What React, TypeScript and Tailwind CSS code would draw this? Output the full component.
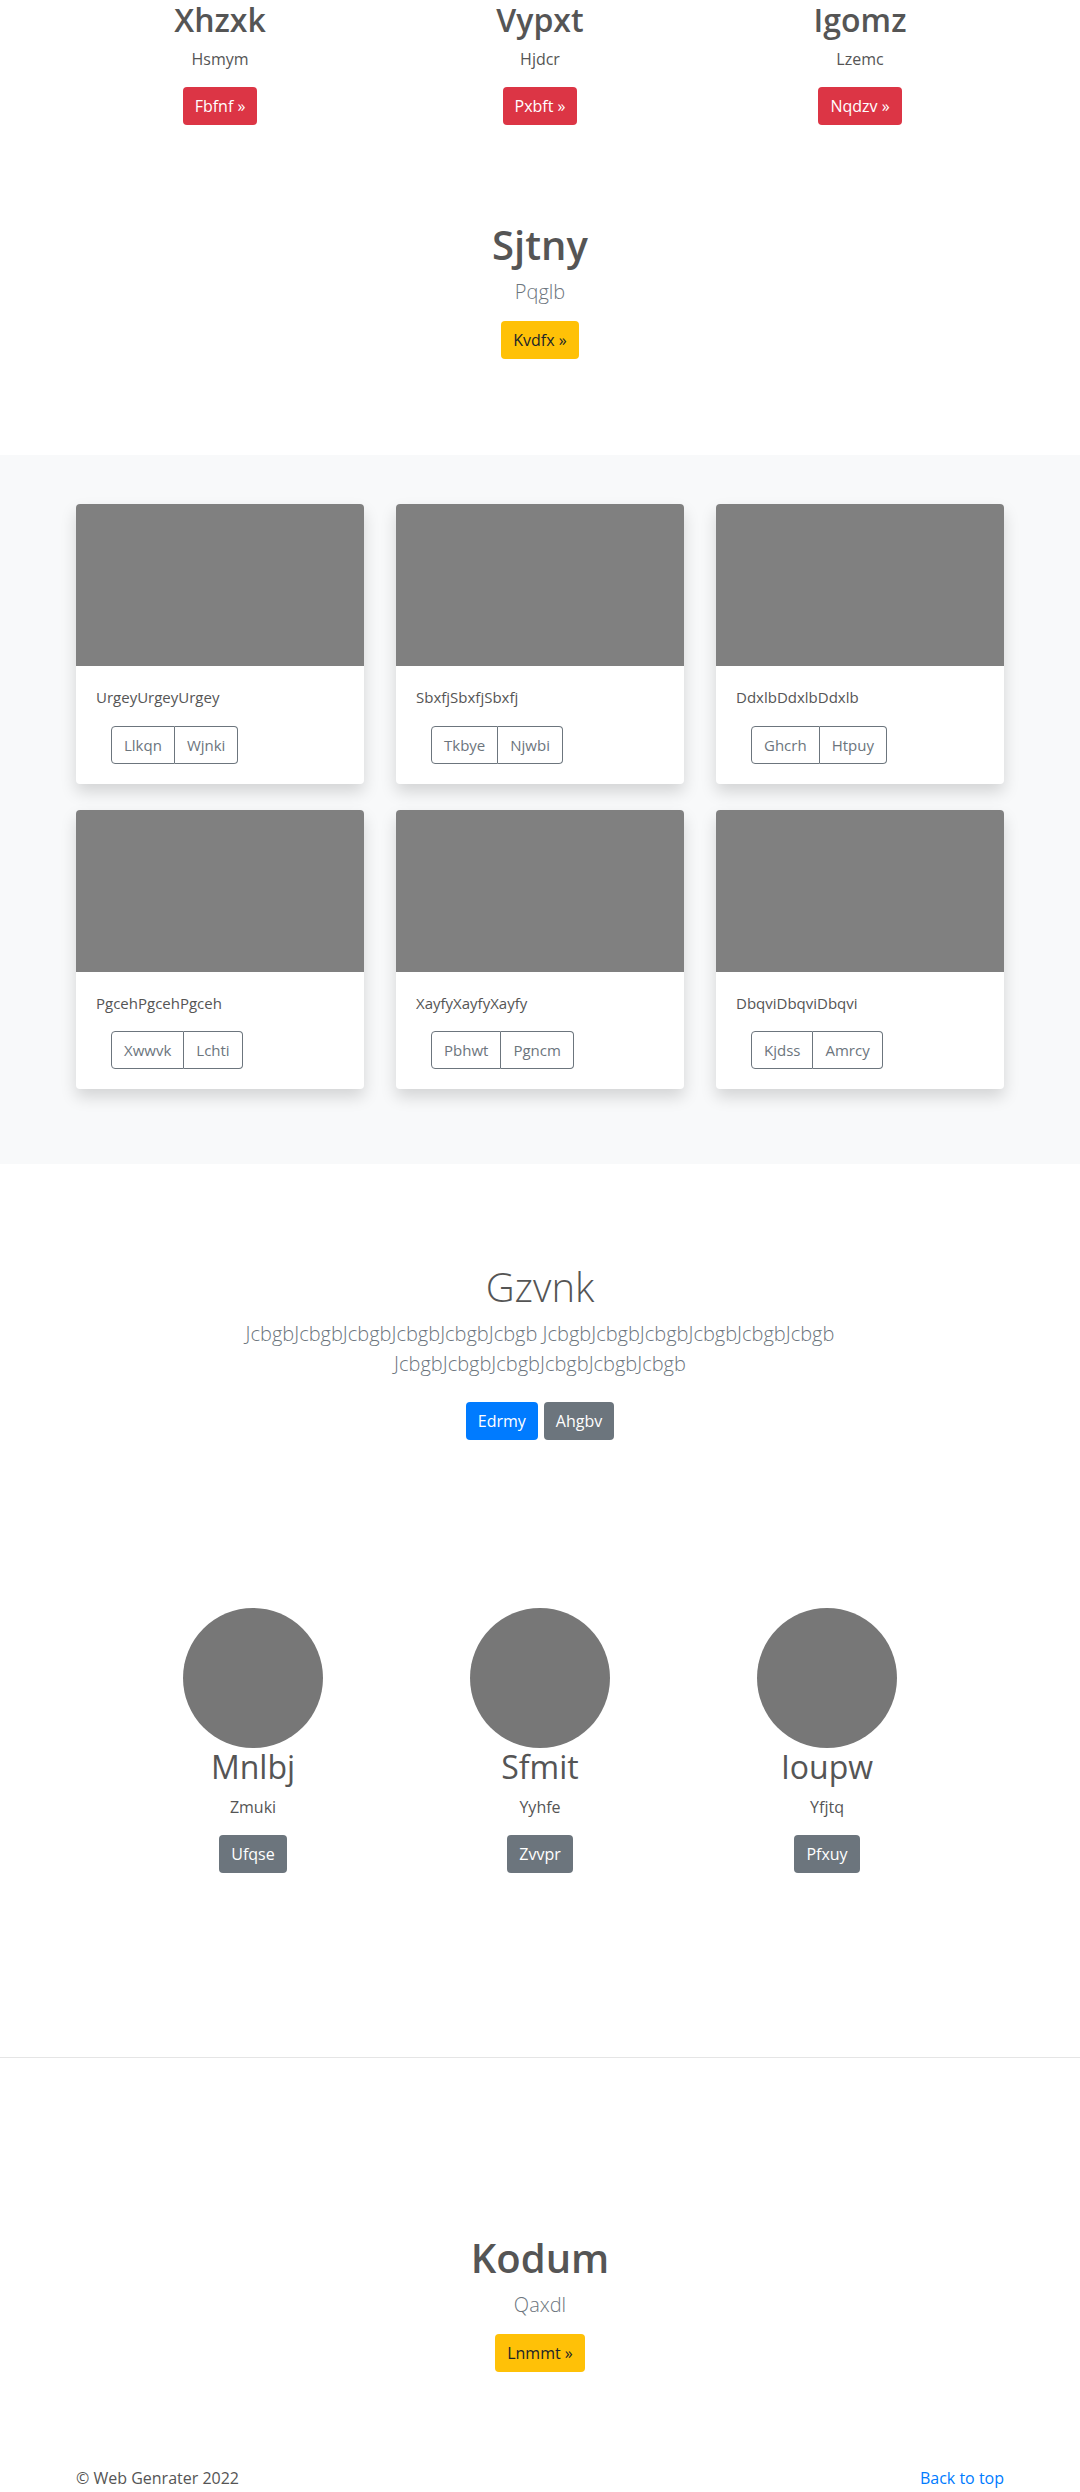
import React from "react";

const font = "font-['Open_Sans','Noto_Sans',sans-serif]";

const topCols = [
  { title: "Xhzxk", text: "Hsmym", btn: "Fbfnf »" },
  { title: "Vypxt", text: "Hjdcr", btn: "Pxbft »" },
  { title: "Igomz", text: "Lzemc", btn: "Nqdzv »" },
];

const cards = [
  { text: "UrgeyUrgeyUrgey", a: "Llkqn", b: "Wjnki" },
  { text: "SbxfjSbxfjSbxfj", a: "Tkbye", b: "Njwbi" },
  { text: "DdxlbDdxlbDdxlb", a: "Ghcrh", b: "Htpuy" },
  { text: "PgcehPgcehPgceh", a: "Xwwvk", b: "Lchti" },
  { text: "XayfyXayfyXayfy", a: "Pbhwt", b: "Pgncm" },
  { text: "DbqviDbqviDbqvi", a: "Kjdss", b: "Amrcy" },
];

const people = [
  { name: "Mnlbj", text: "Zmuki", btn: "Ufqse" },
  { name: "Sfmit", text: "Yyhfe", btn: "Zvvpr" },
  { name: "Ioupw", text: "Yfjtq", btn: "Pfxuy" },
];

const btn = "inline-block px-3 py-[7px] text-base leading-6 rounded";

const Feature = ({ title, text, btnText }: { title: string; text: string; btnText: string }) => (
  <div className="text-center">
    <h1 className="text-[40px] leading-[1.2] font-semibold mb-2">{title}</h1>
    <p className="text-[20px] leading-[1.5] font-light text-[#6c757d] mb-[14px]">{text}</p>
    <a className={`${btn} bg-[#ffc107] text-[#212529]`}>{btnText}</a>
  </div>
);

export default function App() {
  return (
    <div className={`${font} bg-white text-[#555]`}>
      {/* three columns */}
      <div className="max-w-[960px] mx-auto grid grid-cols-3 pt-px">
        {topCols.map((c) => (
          <div key={c.title} className="text-center">
            <h2 className="text-[32px] leading-[1.2] font-semibold mb-2">{c.title}</h2>
            <p className="text-base leading-6 mb-4">{c.text}</p>
            <a className={`${btn} bg-[#dc3545] text-white`}>{c.btn}</a>
          </div>
        ))}
      </div>

      <div className="pt-[96px] pb-[96px]">
        <Feature title="Sjtny" text="Pqglb" btnText="Kvdfx »" />
      </div>

      {/* album */}
      <div className="bg-[#f8f9fa] pt-[49px] pb-[75px]">
        <div className="max-w-[928px] mx-auto grid grid-cols-3 gap-x-8 gap-y-[26px]">
          {cards.map((c) => (
            <div key={c.text} className="bg-white rounded shadow-[0_8px_16px_rgba(0,0,0,0.15)] overflow-hidden">
              <div className="h-[162px] bg-[#808080]" />
              <div className="p-5">
                <p className="text-[15px] leading-[22.5px] mb-[17px]">{c.text}</p>
                <div className="inline-flex ml-[15px] text-[15px] text-[#6c757d]">
                  <a className="px-3 h-[38px] leading-[36px] border border-[#6c757d] rounded-l">{c.a}</a>
                  <a className="px-3 h-[38px] leading-[36px] border border-[#6c757d] border-l-0 rounded-r">{c.b}</a>
                </div>
              </div>
            </div>
          ))}
        </div>
      </div>

      {/* jumbotron */}
      <div className="pt-[99px] text-center">
        <h1 className="text-[40px] leading-[1.2] font-light mb-2">Gzvnk</h1>
        <p className="max-w-[640px] mx-auto text-[20px] leading-[30px] font-light text-[#6c757d] mb-[23px] break-words">
          JcbgbJcbgbJcbgbJcbgbJcbgbJcbgb JcbgbJcbgbJcbgbJcbgbJcbgbJcbgb JcbgbJcbgbJcbgbJcbgbJcbgbJcbgb
        </p>
        <div className="flex justify-center gap-1.5">
          <a className={`${btn} bg-[#007bff] text-white`}>Edrmy</a>
          <a className={`${btn} bg-[#6c757d] text-white`}>Ahgbv</a>
        </div>
      </div>

      {/* marketing */}
      <div className="max-w-[861px] mx-auto grid grid-cols-3 mt-[168px]">
        {people.map((p) => (
          <div key={p.name} className="text-center">
            <div className="w-[140px] h-[140px] rounded-full bg-[#777] mx-auto" />
            <h2 className="text-[32px] leading-[1.2] font-normal mb-2">{p.name}</h2>
            <p className="text-base leading-6 mb-4">{p.text}</p>
            <a className={`${btn} bg-[#6c757d] text-white`}>{p.btn}</a>
          </div>
        ))}
      </div>

      <div className="mt-[184px] h-px bg-[#e5e5e5]" />

      <div className="pt-[176px]">
        <Feature title="Kodum" text="Qaxdl" btnText="Lnmmt »" />
      </div>

      <footer className="pt-[94px] pb-4">
        <div className="max-w-[928px] mx-auto flex justify-between text-base leading-6">
          <p>© Web Genrater 2022</p>
          <a className="text-[#007bff]">Back to top</a>
        </div>
      </footer>
    </div>
  );
}
